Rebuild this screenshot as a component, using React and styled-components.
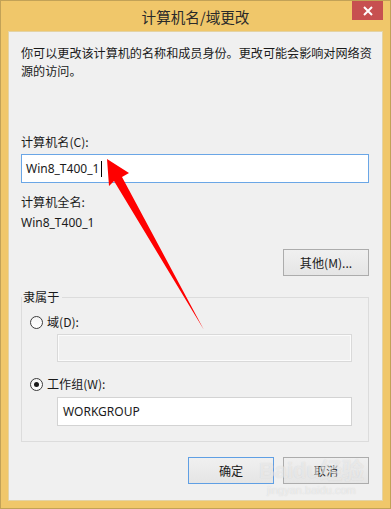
import React from "react";
import styled, { createGlobalStyle } from "styled-components";

const Global = createGlobalStyle`
  html, body { margin: 0; padding: 0; background: #ffffff; }
  body { font-family: "Noto Sans CJK SC", "Noto Sans", sans-serif; }
  * { box-sizing: border-box; }
`;

const Window = styled.div`
  position: relative;
  width: 391px;
  height: 509px;
  background: #f0c76a;
  border: 1px solid #c2a257;
  padding: 0 7px 7px 7px;
  display: flex;
  flex-direction: column;
  overflow: hidden;
`;

const TitleBar = styled.div`
  height: 30px;
  flex: none;
  display: grid;
  grid-template-columns: 1fr auto 1fr;
  align-items: center;
`;

const Title = styled.div`
  grid-column: 2;
  font-family: "Noto Sans CJK SC", sans-serif;
  font-size: 14.6px;
  color: #2a2a2a;
  line-height: 30px;
  padding-top: 1px;
`;

const Close = styled.div`
  grid-column: 3;
  justify-self: end;
  align-self: start;
  width: 31px;
  height: 19px;
  background: #c75050;
  display: flex;
  align-items: center;
  justify-content: center;
`;

const Panel = styled.div`
  flex: 1;
  background: #f0f0f0;
  border: 1px solid #e4d3a4;
  padding: 12px 13px 0 12px;
  display: flex;
  flex-direction: column;
  font-size: 12.1px;
  line-height: 18px;
  color: #1a1a1a;
`;

const Desc = styled.p`
  margin: 0;
  white-space: nowrap;
`;

const Label = styled.div`
  margin-top: ${(p) => p.$mt || 0}px;
`;

const TextBox = styled.div`
  height: ${(p) => p.$h || 29}px;
  margin-top: ${(p) => p.$mt || 3}px;
  margin-left: ${(p) => p.$ml || 0}px;
  border: 1px solid ${(p) => (p.$focus ? "#6aa6e6" : p.$disabled ? "#d9d9d9" : "#d3d3d3")};
  background: ${(p) => (p.$disabled ? "#f0f0f0" : "#ffffff")};
  box-shadow: ${(p) => (p.$disabled ? "inset 0 0 0 1px #fbfbfb" : "none")};
  display: flex;
  align-items: center;
  padding-left: ${(p) => p.$pl || 4}px;
  font-family: "Noto Sans", "Noto Sans CJK SC", sans-serif;
  font-size: 12px;
  color: #1a1a1a;
`;

const Caret = styled.span`
  display: inline-block;
  width: 1px;
  height: 16px;
  background: #000;
  margin-left: 2px;
`;

const Value = styled.div`
  margin-top: 3px;
  font-family: "Noto Sans", "Noto Sans CJK SC", sans-serif;
  font-size: 12px;
`;

const ButtonRow = styled.div`
  display: flex;
  justify-content: flex-end;
  gap: 9px;
  margin-top: ${(p) => p.$mt || 0}px;
`;

const Button = styled.div`
  width: 86px;
  height: 27px;
  border: 1px solid ${(p) => (p.$default ? "#5f9fe4" : "#acacac")};
  background: linear-gradient(#f0f0f0, #e5e5e5);
  display: flex;
  align-items: center;
  justify-content: center;
  font-size: 12.1px;
  color: #1a1a1a;
`;

const Group = styled.div`
  position: relative;
  margin-top: 21px;
  border: 1px solid #dcdcdc;
  padding: 15px 16px 15px 8px;
  display: flex;
  flex-direction: column;
`;

const Legend = styled.span`
  position: absolute;
  top: -10px;
  left: 0;
  background: #f0f0f0;
  padding: 0 3px 0 1px;
`;

const RadioRow = styled.div`
  display: flex;
  align-items: center;
  gap: 4px;
  margin-top: ${(p) => p.$mt || 0}px;
`;

const Radio = styled.span`
  width: 13px;
  height: 13px;
  border-radius: 50%;
  border: 1px solid #3c3c3c;
  background: linear-gradient(#f4f4f4, #ffffff);
  display: flex;
  align-items: center;
  justify-content: center;
  &::after {
    content: "";
    width: 5px;
    height: 5px;
    border-radius: 50%;
    background: ${(p) => (p.$checked ? "#1a1a1a" : "transparent")};
  }
`;

const Watermark = styled.div`
  position: absolute;
  right: 26px;
  bottom: 12px;
  display: flex;
  flex-direction: column;
  align-items: center;
  pointer-events: none;
  color: rgba(255, 255, 255, 0.5);
  text-shadow: 0 0 1px rgba(140, 140, 140, 0.3);
  font-family: "Liberation Sans", "Noto Sans CJK SC", sans-serif;
`;

const WmMain = styled.div`
  font-size: 22px;
  font-weight: bold;
  line-height: 22px;
`;

const WmSub = styled.div`
  font-size: 11px;
  line-height: 12px;
  margin-top: 2px;
`;

const Arrow = styled.svg`
  position: absolute;
  left: 0;
  top: 0;
  pointer-events: none;
`;

export default function App() {
  return (
    <>
      <Global />
      <Window>
        <TitleBar>
          <Title>计算机名/域更改</Title>
          <Close>
            <svg width="10" height="10" viewBox="0 0 10 10">
              <path d="M1 1 L9 9 M9 1 L1 9" stroke="#fff" strokeWidth="2" />
            </svg>
          </Close>
        </TitleBar>
        <Panel>
          <Desc>
            你可以更改该计算机的名称和成员身份。更改可能会影响对网络资
            <br />
            源的访问。
          </Desc>
          <Label $mt={53}>计算机名(C):</Label>
          <TextBox $focus $mt={3}>
            Win8_T400_1
            <Caret />
          </TextBox>
          <Label $mt={10}>计算机全名:</Label>
          <Value>Win8_T400_1</Value>
          <ButtonRow $mt={17}>
            <Button>其他(M)...</Button>
          </ButtonRow>
          <Group>
            <Legend>隶属于</Legend>
            <RadioRow>
              <Radio />
              <span>域(D):</span>
            </RadioRow>
            <TextBox $disabled $h={28} $ml={27} $mt={3} />
            <RadioRow $mt={13}>
              <Radio $checked />
              <span>工作组(W):</span>
            </RadioRow>
            <TextBox $h={29} $ml={27} $mt={4} $pl={5}>
              WORKGROUP
            </TextBox>
          </Group>
          <ButtonRow $mt={15}>
            <Button $default>确定</Button>
            <Button>取消</Button>
          </ButtonRow>
        </Panel>
        <Watermark>
          <WmMain>Baidu经验</WmMain>
          <WmSub>jingyan.baidu.com</WmSub>
        </Watermark>
        <Arrow width="391" height="509" viewBox="0 0 391 509">
          <polygon
            points="106,158 128,172 121,176 203,329 113,180 108,185"
            fill="#ff0000"
          />
        </Arrow>
      </Window>
    </>
  );
}
